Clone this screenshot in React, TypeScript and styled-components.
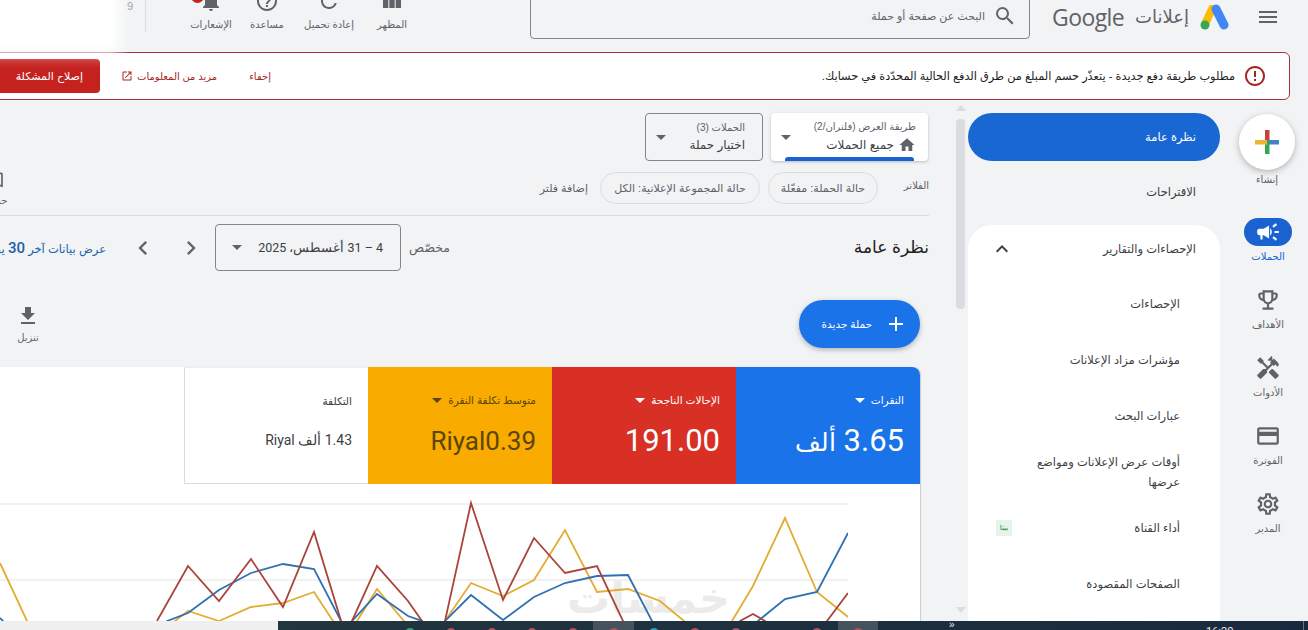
import styled, { createGlobalStyle } from "styled-components"
import {
  MdMenu,
  MdSearch,
  MdViewColumn,
  MdRefresh,
  MdHelpOutline,
  MdNotifications,
  MdErrorOutline,
  MdOpenInNew,
  MdHome,
  MdCampaign,
  MdOutlineEmojiEvents,
  MdHandyman,
  MdPayment,
  MdOutlineSettings,
  MdExpandLess,
  MdChevronLeft,
  MdChevronRight,
  MdAdd,
  MdFileDownload,
  MdOutlineBookmarkBorder,
} from "react-icons/md"

const GlobalStyle = createGlobalStyle`
  html, body {
    margin: 0;
    padding: 0;
    overflow: hidden;
    background: #f1f3f4;
  }
  * { box-sizing: border-box; }
`

const Page = styled.div`
  position: relative;
  width: 1308px;
  height: 630px;
  overflow: hidden;
  display: flex;
  flex-direction: column;
  background: #f1f3f4;
  color: #202124;
  font-family: "Liberation Sans", "DejaVu Sans", sans-serif;
  font-size: 12px;
`

const Smear = styled.div`
  position: absolute;
  left: -30px;
  top: -20px;
  width: 150px;
  height: 74px;
  background: #fff;
  filter: blur(7px);
`

/* header */
const Header = styled.header`
  flex: none;
  height: 40px;
  display: flex;
  align-items: flex-end;
  padding-right: 28px;
`

const MenuButton = styled.div`
  align-self: flex-start;
  margin-top: 5px;
  display: flex;
  color: #5f6368;
  font-size: 24px;
`

const Brand = styled.div`
  align-self: flex-start;
  display: flex;
  align-items: center;
  height: 33px;
  margin: 0 26px 0 21px;
  width: 179px;
  flex: none;
  gap: 11px;
`

const BrandName = styled.span`
  font-size: 18px;
  color: #5f6368;
`

const GoogleWord = styled.span`
  font-family: "Open Sans", sans-serif;
  font-size: 23px;
  font-weight: 500;
  letter-spacing: -0.6px;
  color: #5f6368;
`

const SearchBox = styled.div`
  width: 500px;
  height: 52px;
  margin-bottom: 1px;
  flex: none;
  display: flex;
  align-items: center;
  gap: 8px;
  padding: 6px 12px 0 0;
  border: 1px solid #80868b;
  border-radius: 4px;
  color: #5f6368;
  font-size: 11px;
`

const ToolGroup = styled.div`
  display: flex;
  margin-right: 107px;
  margin-bottom: 8px;
`

const ToolItem = styled.div<{ $w: number }>`
  position: relative;
  width: ${(p) => p.$w}px;
  display: flex;
  flex-direction: column;
  align-items: center;
  color: #5f6368;
  font-size: 24px;
`

const ToolLabel = styled.span`
  font-size: 10px;
  line-height: 14px;
  margin-top: 5px;
  white-space: nowrap;
`

const RedDot = styled.span`
  position: absolute;
  top: 1px;
  left: 6px;
  width: 13px;
  height: 13px;
  border-radius: 50%;
  background: #c5221f;
`

const HeaderDivider = styled.div`
  width: 1px;
  height: 34px;
  margin: 0 39px 8px 0;
  background: #dadce0;
`

const FadedGlyph = styled.span`
  align-self: flex-start;
  margin: 0 12px 0 0;
  color: #9aa0a6;
  font-size: 11px;
`

/* alert */
const Alert = styled.section`
  flex: none;
  width: 1304px;
  height: 48px;
  margin: 12px 18px 0 0;
  padding: 0 22px 0 6px;
  display: flex;
  align-items: center;
  background: #fff;
  border: 1px solid #a9323a;
  border-radius: 6px;
  font-size: 11.3px;
`

const AlertIcon = styled.span`
  display: flex;
  margin-left: 8px;
  color: #a3261f;
  font-size: 24px;
`

const AlertActions = styled.div`
  margin-right: auto;
  display: flex;
  align-items: center;
  color: #a5271f;
  font-size: 10px;
`

const AlertLink = styled.span<{ $gap: number }>`
  display: flex;
  align-items: center;
  gap: 4px;
  margin-left: ${(p) => p.$gap}px;
`

const FixButton = styled.div`
  width: 107px;
  height: 34px;
  display: flex;
  align-items: center;
  justify-content: flex-start;
  padding-right: 17px;
  border-radius: 4px;
  background: #c5221f;
  color: #fff;
  font-size: 11px;
`

/* main area */
const Body = styled.div`
  flex: 1;
  min-height: 0;
  display: flex;
`

const Rail = styled.nav`
  flex: none;
  width: 88px;
  padding: 14px 0 0 0;
  display: flex;
  flex-direction: column;
  align-items: center;
`

const CreateBlock = styled.div`
  width: 56px;
  height: 104px;
  margin-left: 6px;
  display: flex;
  flex-direction: column;
  align-items: center;
`

const Fab = styled.div`
  width: 56px;
  height: 56px;
  flex: none;
  display: flex;
  align-items: center;
  justify-content: center;
  border-radius: 50%;
  background: #fff;
  box-shadow: 0 2px 6px rgba(60, 64, 67, 0.35);
`

const RailLabel = styled.span<{ $active?: boolean }>`
  font-size: 10px;
  line-height: 14px;
  margin-top: 3px;
  white-space: nowrap;
  color: ${(p) => (p.$active ? "#1a62d0" : "#5f6368")};
`

const RailItem = styled.div`
  height: 68px;
  width: 76px;
  margin-left: 8px;
  display: flex;
  flex-direction: column;
  align-items: center;
  gap: 1px;
`

const RailIcon = styled.div<{ $active?: boolean }>`
  width: 48px;
  height: 28px;
  display: flex;
  align-items: center;
  justify-content: center;
  border-radius: 14px;
  font-size: 26px;
  background: ${(p) => (p.$active ? "#1a62d0" : "transparent")};
  color: ${(p) => (p.$active ? "#fff" : "#5f6368")};
`

const SideNav = styled.div`
  flex: none;
  width: 252px;
  padding-top: 13px;
  display: flex;
  flex-direction: column;
  font-size: 11.5px;
`

const ActiveNav = styled.div`
  height: 48px;
  flex: none;
  display: flex;
  align-items: center;
  padding-right: 24px;
  border-radius: 24px;
  background: #1967d2;
  color: #fff;
`

const PlainNav = styled.div`
  height: 48px;
  flex: none;
  margin: 7px 0 9px;
  display: flex;
  align-items: center;
  padding-right: 24px;
  color: #3c4043;
`

const NavCard = styled.div`
  flex: 1;
  min-height: 0;
  overflow: hidden;
  border-radius: 24px 24px 0 0;
  background: #fff;
`

const NavCardHeader = styled.div`
  height: 47px;
  margin-bottom: 4px;
  display: flex;
  align-items: center;
  justify-content: space-between;
  padding: 0 24px 0 22px;
  color: #3c4043;
`

const ChevronWrap = styled.span`
  display: flex;
  font-size: 24px;
  color: #3c4043;
`

const NavRow = styled.div`
  height: 56px;
  display: flex;
  align-items: center;
  justify-content: space-between;
  padding: 0 40px 0 28px;
  line-height: 20px;
  color: #3c4043;
`

const NavRowLines = styled(NavRow)`
  display: block;
  padding-top: 8px;
`

const BetaBadge = styled.span`
  width: 16px;
  height: 16px;
  display: flex;
  align-items: center;
  justify-content: center;
  background: #e6f4ea;
  color: #188038;
  font-size: 7px;
`

const ScrollGutter = styled.div`
  flex: none;
  width: 13px;
  padding: 5px 3px 0 1px;
  display: flex;
  flex-direction: column;
  align-items: center;
`

const ScrollArrow = styled.span<{ $down?: boolean }>`
  width: 0;
  height: 0;
  border-left: 5px solid transparent;
  border-right: 5px solid transparent;
  ${(p) => (p.$down ? "border-top: 6px solid #dadce0; margin-top: auto; margin-bottom: 8px;" : "border-bottom: 6px solid #dadce0;")}
`

const ScrollThumb = styled.div`
  width: 9px;
  height: 190px;
  margin-top: 8px;
  border-radius: 4px;
  background: #dadce0;
`

const Content = styled.main`
  flex: none;
  width: 929px;
  margin-right: 26px;
  padding-top: 13px;
  display: flex;
  flex-direction: column;
`

const SelectorRow = styled.div`
  display: flex;
  gap: 8px;
  padding-right: 1px;
  height: 48px;
  flex: none;
`

const ViewSelector = styled.div`
  position: relative;
  width: 157px;
  display: flex;
  align-items: center;
  padding: 0 12px 0 10px;
  background: #fff;
  border-radius: 4px;
  box-shadow: 0 1px 3px rgba(60, 64, 67, 0.3);
`

const CampaignSelector = styled.div`
  width: 118px;
  display: flex;
  align-items: center;
  padding: 0 17px 0 10px;
  border: 1px solid #80868b;
  border-radius: 4px;
`

const SelectorText = styled.div`
  display: flex;
  flex-direction: column;
  gap: 2px;
`

const SelectorCaption = styled.span`
  font-size: 10px;
  line-height: 14px;
  color: #5f6368;
  white-space: nowrap;
`

const SelectorValue = styled.span`
  display: flex;
  align-items: center;
  gap: 4px;
  font-size: 12px;
  line-height: 16px;
  white-space: nowrap;
  color: #3c4043;
`

const HomeGlyph = styled.span`
  display: flex;
  font-size: 18px;
  color: #5f6368;
`

const Caret = styled.span<{ $color?: string }>`
  flex: none;
  width: 0;
  height: 0;
  margin-right: auto;
  border-left: 5px solid transparent;
  border-right: 5px solid transparent;
  border-top: 5px solid ${(p) => p.$color || "#5f6368"};
`

const SelectedBar = styled.span`
  position: absolute;
  left: 14px;
  right: 14px;
  bottom: 0;
  height: 4px;
  border-radius: 3px 3px 0 0;
  background: #1a62d0;
`

const FilterRow = styled.div`
  flex: none;
  height: 44px;
  margin-top: 11px;
  padding-bottom: 11px;
  display: flex;
  align-items: center;
  border-bottom: 1px solid #dadce0;
`

const FilterLabel = styled.span`
  width: 51px;
  flex: none;
  color: #5f6368;
  font-size: 10px;
  margin-top: -6px;
`

const Chip = styled.span<{ $width: number }>`
  width: ${(p) => p.$width}px;
  height: 32px;
  flex: none;
  margin-left: 8px;
  display: flex;
  align-items: center;
  justify-content: center;
  border: 1px solid #dadce0;
  border-radius: 16px;
  color: #5f6368;
  font-size: 11px;
  white-space: nowrap;
`

const AddFilter = styled.span`
  margin-right: 4px;
  color: #5f6368;
  font-size: 11px;
  white-space: nowrap;
`

const SaveAction = styled.div`
  margin-right: auto;
  margin-left: -13px;
  display: flex;
  flex-direction: column;
  align-items: center;
  gap: 5px;
  width: 20px;
  color: #5f6368;
  font-size: 20px;
`

const SaveLabel = styled.span`
  font-size: 10px;
  line-height: 12px;
`

const DateRow = styled.div`
  flex: none;
  margin-top: 8px;
  height: 47px;
  display: flex;
  align-items: center;
  white-space: nowrap;
`

const PageTitle = styled.h1`
  width: 479px;
  flex: none;
  margin: 0;
  font-size: 17px;
  font-weight: 400;
  color: #202124;
`

const RangeLabel = styled.span`
  width: 49px;
  flex: none;
  color: #5f6368;
  font-size: 12.5px;
`

const DateBox = styled.div`
  width: 186px;
  height: 47px;
  flex: none;
  display: flex;
  align-items: center;
  padding: 0 17px 0 16px;
  border: 1px solid #80868b;
  border-radius: 4px;
  font-family: "Roboto", "Liberation Sans", sans-serif;
  font-size: 12.5px;
  color: #3c4043;
`

const PagerIcon = styled.span<{ $gap: number }>`
  display: flex;
  font-size: 28px;
  margin-inline: ${(p) => p.$gap - 2}px -2px;
  color: #5f6368;
`

const RangeLink = styled.span`
  margin-right: 25px;
  color: #1a62a8;
  font-size: 11.5px;
`

const RangeNumber = styled.b`
  font-family: "Roboto", sans-serif;
  font-size: 15px;
  font-weight: 500;
`

const ActionRow = styled.div`
  flex: none;
  margin-top: 29px;
  height: 48px;
  display: flex;
  justify-content: space-between;
  padding: 0 9px 0 12px;
`

const NewCampaign = styled.div`
  width: 121px;
  display: flex;
  align-items: center;
  gap: 12px;
  padding-right: 12px;
  border-radius: 24px;
  background: #1a73e8;
  color: #fff;
  font-size: 10.5px;
  box-shadow: 0 2px 5px rgba(60, 64, 67, 0.35);
`

const PlusGlyph = styled.span`
  display: flex;
  font-size: 24px;
`

const DownloadAction = styled.div`
  width: 32px;
  display: flex;
  flex-direction: column;
  align-items: center;
  padding-top: 4px;
  color: #5f6368;
  font-size: 24px;
`

const DownloadLabel = styled.span`
  font-size: 10px;
  line-height: 14px;
  margin-top: 3px;
`

const Panel = styled.section`
  position: relative;
  flex: 1;
  min-height: 0;
  width: 940px;
  overflow: hidden;
  margin: 19px 9px 0 0;
  background: #fff;
  border-radius: 8px 8px 0 0;
  box-shadow: 1px 0 1px rgba(60, 64, 67, 0.22);
`

const ScoreRow = styled.div`
  height: 117px;
  display: flex;
`

const ScoreCard = styled.div<{ $bg: string; $fg: string; $outlined?: boolean }>`
  width: 184px;
  flex: none;
  padding: 26px 16px 0 0;
  display: flex;
  flex-direction: column;
  background: ${(p) => p.$bg};
  color: ${(p) => p.$fg};
  ${(p) => p.$outlined && "border-left: 1px solid #dadce0; border-bottom: 1px solid #dadce0; border-top: 1px solid #eceef0;"}
`

const ScoreLabel = styled.div`
  display: flex;
  align-items: center;
  gap: 6px;
  height: 14px;
  font-size: 10.5px;
  white-space: nowrap;
`

const ScoreCaret = styled(Caret)`
  margin-right: 0;
`

const ScoreValue = styled.div<{ $size?: number }>`
  margin-top: 15px;
  font-family: "Roboto", "Liberation Sans", sans-serif;
  font-size: ${(p) => p.$size || 31}px;
  line-height: 38px;
  white-space: nowrap;
`

const ScoreUnit = styled.span`
  font-size: 25px;
`

const CostValue = styled.div`
  margin-top: 13px;
  font-family: "Roboto", "Liberation Sans", sans-serif;
  font-size: 14px;
  line-height: 38px;
  color: #3c4043;
  white-space: nowrap;
`

const Watermark = styled.span`
  position: absolute;
  right: 190px;
  bottom: -2px;
  color: #ebebeb;
  font-size: 43px;
  line-height: 50px;
  font-weight: 700;
`

const Chart = styled.svg`
  position: relative;
  display: block;
  margin-right: 72px;
`

/* bottom strip */
const BottomStrip = styled.div`
  flex: none;
  height: 9px;
  display: flex;
  direction: ltr;
  background: #f0f0f0;
`

const Taskbar = styled.div`
  position: relative;
  margin-left: 278px;
  width: 1030px;
  display: flex;
  overflow: hidden;
  padding-left: 112px;
  background: linear-gradient(90deg, #21363f, #1a2a3e);
  color: #e8eaed;
`

const TaskSlot = styled.div<{ $active?: boolean }>`
  width: 40.7px;
  flex: none;
  display: flex;
  justify-content: center;
  background: ${(p) => (p.$active ? "#44535e" : "transparent")};
`

const TaskDot = styled.span<{ $color: string }>`
  width: 10px;
  height: 10px;
  margin-top: 7px;
  border-radius: 50%;
  background: ${(p) => p.$color};
`

const TrayChevrons = styled.span`
  position: absolute;
  left: 671px;
  top: -1px;
  font-size: 10px;
  line-height: 10px;
`

const Clock = styled.span`
  position: absolute;
  left: 928px;
  top: 4px;
  font-family: "Roboto", sans-serif;
  font-size: 11px;
  line-height: 13px;
`

const TrayEdge = styled.span`
  position: absolute;
  right: 4px;
  top: 0;
  width: 1px;
  height: 9px;
  background: #6b7680;
`

// runs along the baseline sink below the clip, the chart is cut off by the taskbar
const sink = (points: string) =>
  points.replace(/(\d+),62[15] (\d+),62[15]/g, "$1,621 $1,650 $2,650 $2,621")

const blueLine = sink("0,618 3,621 167,621 188,613 219,590 251,573 283,564 314,569 341,621 352,621 377,594 408,616 422,621 445,621 471,595 503,620 534,597 565,583 597,576 628,575 652,621 758,621 785,599 817,592 848,533")
const redLine = sink("157,621 188,566 219,601 251,559 283,607 314,532 341,621 352,621 377,566 408,601 422,621 445,621 471,503 503,600 534,538 565,573 597,566 623,621 740,621 753,614 765,621 827,621 848,593")
const yellowLine = sink("0,563 27,621 175,621 188,611 219,621 251,607 283,603 314,592 333,621 357,621 377,589 404,621 445,621 471,583 503,596 534,580 565,530 597,592 628,589 660,601 684,621 732,621 753,586 785,518 817,592 848,617")

const taskSlots = [
  { color: "#2fa37c" },
  { color: "#b5505f" },
  { color: "#b5505f" },
  { color: "#b5505f" },
  { color: "#b5505f" },
  { color: "#b5505f", active: true },
  { color: "#23a6b8" },
  { color: "#b5505f" },
  { color: "#b5505f" },
  { color: "transparent" },
  { color: "#b5505f" },
  { color: "#b5505f", active: true },
]

const railItems = [
  { label: "الأهداف", icon: <MdOutlineEmojiEvents /> },
  { label: "الأدوات", icon: <MdHandyman /> },
  { label: "الفوترة", icon: <MdPayment /> },
  { label: "المدير", icon: <MdOutlineSettings /> },
]

const subNav = ["الإحصاءات", "مؤشرات مزاد الإعلانات", "عبارات البحث"]

function AdsLogo() {
  return (
    <svg width="30" height="27" viewBox="0 0 30 27">
      <line x1="12" y1="6" x2="5" y2="21" stroke="#fbbc04" strokeWidth="8" strokeLinecap="round" />
      <line x1="16" y1="6" x2="24" y2="22" stroke="#4285f4" strokeWidth="9" strokeLinecap="round" />
      <circle cx="5" cy="22" r="4.5" fill="#34a853" />
    </svg>
  )
}

function GooglePlus() {
  return (
    <svg width="24" height="24" viewBox="0 0 24 24">
      <rect x="10" y="0" width="4.5" height="12" fill="#c5443a" />
      <rect x="12" y="10" width="12" height="4.5" fill="#4285c4" />
      <rect x="10" y="12" width="4.5" height="12" fill="#34a853" />
      <rect x="0" y="10" width="12" height="4.5" fill="#f0b52e" />
    </svg>
  )
}

export default function App() {
  return (
    <Page dir="rtl">
      <GlobalStyle />
      <Header>
        <MenuButton>
          <MdMenu />
        </MenuButton>
        <Brand>
          <AdsLogo />
          <BrandName>إعلانات</BrandName>
          <GoogleWord>Google</GoogleWord>
        </Brand>
        <SearchBox>
          <MdSearch size={24} />
          <span>البحث عن صفحة أو حملة</span>
        </SearchBox>
        <ToolGroup>
          <ToolItem $w={62}>
            <MdViewColumn />
            <ToolLabel>المظهر</ToolLabel>
          </ToolItem>
          <ToolItem $w={64}>
            <MdRefresh />
            <ToolLabel>إعادة تحميل</ToolLabel>
          </ToolItem>
          <ToolItem $w={60}>
            <MdHelpOutline />
            <ToolLabel>مساعدة</ToolLabel>
          </ToolItem>
          <ToolItem $w={52}>
            <MdNotifications />
            <RedDot />
            <ToolLabel>الإشعارات</ToolLabel>
          </ToolItem>
        </ToolGroup>
        <HeaderDivider />
        <FadedGlyph>9</FadedGlyph>
      </Header>

      <Alert>
        <AlertIcon>
          <MdErrorOutline />
        </AlertIcon>
        <span>مطلوب طريقة دفع جديدة - يتعذّر حسم المبلغ من طرق الدفع الحالية المحدّدة في حسابك.</span>
        <AlertActions>
          <AlertLink $gap={32}>إخفاء</AlertLink>
          <AlertLink $gap={21}>
            مزيد من المعلومات
            <MdOpenInNew size={12} />
          </AlertLink>
          <FixButton>إصلاح المشكلة</FixButton>
        </AlertActions>
      </Alert>

      <Body>
        <Rail>
          <CreateBlock>
            <Fab>
              <GooglePlus />
            </Fab>
            <RailLabel>إنشاء</RailLabel>
          </CreateBlock>
          <RailItem>
            <RailIcon $active>
              <MdCampaign />
            </RailIcon>
            <RailLabel $active>الحملات</RailLabel>
          </RailItem>
          {railItems.map((item) => (
            <RailItem key={item.label}>
              <RailIcon>{item.icon}</RailIcon>
              <RailLabel>{item.label}</RailLabel>
            </RailItem>
          ))}
        </Rail>

        <SideNav>
          <ActiveNav>نظرة عامة</ActiveNav>
          <PlainNav>الاقتراحات</PlainNav>
          <NavCard>
            <NavCardHeader>
              <span>الإحصاءات والتقارير</span>
              <ChevronWrap>
                <MdExpandLess />
              </ChevronWrap>
            </NavCardHeader>
            {subNav.map((label) => (
              <NavRow key={label}>{label}</NavRow>
            ))}
            <NavRowLines>
              أوقات عرض الإعلانات ومواضع
              <br />
              عرضها
            </NavRowLines>
            <NavRow>
              <span>أداء القناة</span>
              <BetaBadge>بيتا</BetaBadge>
            </NavRow>
            <NavRow>الصفحات المقصودة</NavRow>
          </NavCard>
        </SideNav>

        <ScrollGutter>
          <ScrollArrow />
          <ScrollThumb />
          <ScrollArrow $down />
        </ScrollGutter>

        <Content>
          <SelectorRow>
            <ViewSelector>
              <SelectorText>
                <SelectorCaption>طريقة العرض (فلتران/2)</SelectorCaption>
                <SelectorValue>
                  <HomeGlyph>
                    <MdHome />
                  </HomeGlyph>
                  جميع الحملات
                </SelectorValue>
              </SelectorText>
              <Caret />
              <SelectedBar />
            </ViewSelector>
            <CampaignSelector>
              <SelectorText>
                <SelectorCaption>الحملات (3)</SelectorCaption>
                <SelectorValue>اختيار حملة</SelectorValue>
              </SelectorText>
              <Caret />
            </CampaignSelector>
          </SelectorRow>

          <FilterRow>
            <FilterLabel>الفلاتر</FilterLabel>
            <Chip $width={110}>حالة الحملة: مفعّلة</Chip>
            <Chip $width={160}>حالة المجموعة الإعلانية: الكل</Chip>
            <AddFilter>إضافة فلتر</AddFilter>
            <SaveAction>
              <MdOutlineBookmarkBorder />
              <SaveLabel>حفظ</SaveLabel>
            </SaveAction>
          </FilterRow>

          <DateRow>
            <PageTitle>نظرة عامة</PageTitle>
            <RangeLabel>مخصّص</RangeLabel>
            <DateBox>
              <span>4 – 31 أغسطس، 2025</span>
              <Caret />
            </DateBox>
            <PagerIcon $gap={12}>
              <MdChevronRight />
            </PagerIcon>
            <PagerIcon $gap={24}>
              <MdChevronLeft />
            </PagerIcon>
            <RangeLink>
              عرض بيانات آخر <RangeNumber>30</RangeNumber> يومًا
            </RangeLink>
          </DateRow>

          <ActionRow>
            <NewCampaign>
              <PlusGlyph>
                <MdAdd />
              </PlusGlyph>
              حملة جديدة
            </NewCampaign>
            <DownloadAction>
              <MdFileDownload />
              <DownloadLabel>تنزيل</DownloadLabel>
            </DownloadAction>
          </ActionRow>

          <Panel>
            <ScoreRow>
              <ScoreCard $bg="#1a73e8" $fg="#fff">
                <ScoreLabel>
                  النقرات
                  <ScoreCaret $color="#fff" />
                </ScoreLabel>
                <ScoreValue>
                  3.65 <ScoreUnit>ألف</ScoreUnit>
                </ScoreValue>
              </ScoreCard>
              <ScoreCard $bg="#d93025" $fg="#fff">
                <ScoreLabel>
                  الإحالات الناجحة
                  <ScoreCaret $color="#fff" />
                </ScoreLabel>
                <ScoreValue>191.00</ScoreValue>
              </ScoreCard>
              <ScoreCard $bg="#f9ab00" $fg="#5a4608">
                <ScoreLabel>
                  متوسط تكلفة النقرة
                  <ScoreCaret $color="#5a4608" />
                </ScoreLabel>
                <ScoreValue $size={26}>Riyal0.39</ScoreValue>
              </ScoreCard>
              <ScoreCard $bg="#fff" $fg="#3c4043" $outlined>
                <ScoreLabel>التكلفة</ScoreLabel>
                <CostValue>1.43 ألف Riyal</CostValue>
              </ScoreCard>
            </ScoreRow>
            <Watermark>خمسات</Watermark>
            <Chart width="848" height="137" viewBox="0 484 848 137">
              <line x1="0" y1="504" x2="848" y2="504" stroke="#ececec" strokeWidth="1.5" />
              <line x1="0" y1="580" x2="848" y2="580" stroke="#ececec" strokeWidth="1.5" />
              <polyline points={yellowLine} fill="none" stroke="#e3ac32" strokeWidth="1.8" />
              <polyline points={blueLine} fill="none" stroke="#2f70b4" strokeWidth="1.8" />
              <polyline points={redLine} fill="none" stroke="#a9443a" strokeWidth="1.8" />
            </Chart>
          </Panel>
        </Content>
      </Body>

      <BottomStrip>
        <Taskbar>
          {taskSlots.map((slot, i) => (
            <TaskSlot key={i} $active={slot.active}>
              <TaskDot $color={slot.color} />
            </TaskSlot>
          ))}
          <TrayChevrons>»</TrayChevrons>
          <Clock>16:20</Clock>
          <TrayEdge />
        </Taskbar>
      </BottomStrip>
      <Smear />
    </Page>
  )
}
